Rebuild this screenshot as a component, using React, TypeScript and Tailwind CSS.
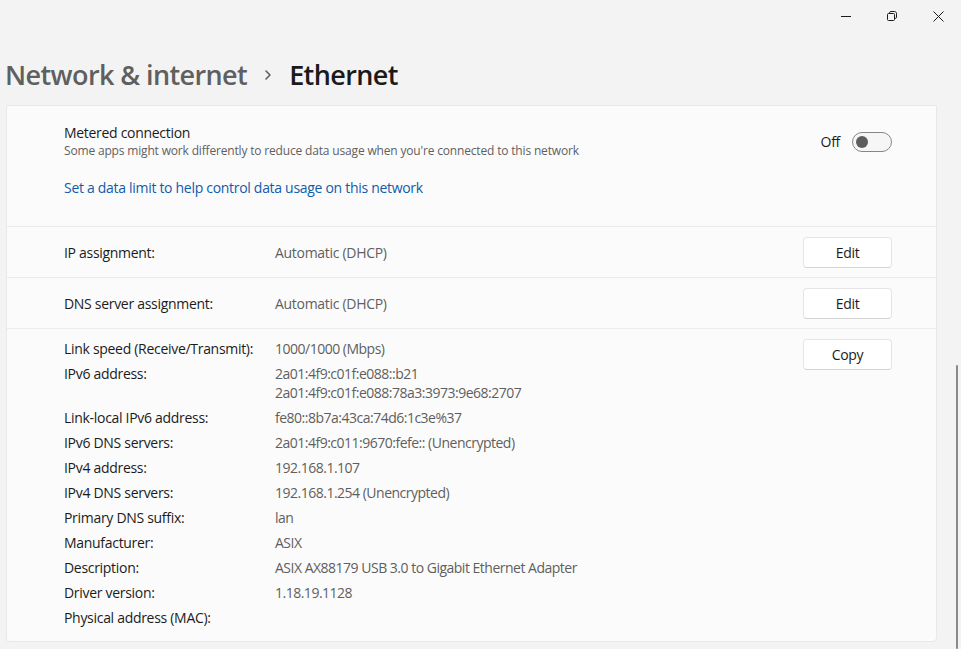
import React from "react";

const details: { label: string; values: string[] }[] = [
  { label: "Link speed (Receive/Transmit):", values: ["1000/1000 (Mbps)"] },
  {
    label: "IPv6 address:",
    values: ["2a01:4f9:c01f:e088::b21", "2a01:4f9:c01f:e088:78a3:3973:9e68:2707"],
  },
  { label: "Link-local IPv6 address:", values: ["fe80::8b7a:43ca:74d6:1c3e%37"] },
  { label: "IPv6 DNS servers:", values: ["2a01:4f9:c011:9670:fefe:: (Unencrypted)"] },
  { label: "IPv4 address:", values: ["192.168.1.107"] },
  { label: "IPv4 DNS servers:", values: ["192.168.1.254 (Unencrypted)"] },
  { label: "Primary DNS suffix:", values: ["lan"] },
  { label: "Manufacturer:", values: ["ASIX"] },
  { label: "Description:", values: ["ASIX AX88179 USB 3.0 to Gigabit Ethernet Adapter"] },
  { label: "Driver version:", values: ["1.18.19.1128"] },
  { label: "Physical address (MAC):", values: [""] },
];

function Btn({ children }: { children: React.ReactNode }) {
  return (
    <button className="w-[89px] h-[31px] bg-white border border-[#e5e5e5] border-b-[#d4d4d4] rounded-[4px] text-[14px] tracking-[-0.3px] text-[#1b1b1b] flex items-center justify-center">
      {children}
    </button>
  );
}

export default function App() {
  return (
    <div
      className="w-[961px] h-[649px] bg-[#f3f3f3] relative overflow-hidden text-[#1b1b1b]"
      style={{ fontFamily: '"Segoe UI", "Open Sans", "Noto Sans", sans-serif' }}
    >
      {/* window controls */}
      <div className="flex justify-end h-[32px]">
        <div className="w-[46px] h-[32px] flex items-center justify-center">
          <svg width="10" height="10" viewBox="0 0 10 10">
            <path d="M0 5.5h10" stroke="#1b1b1b" strokeWidth="1" />
          </svg>
        </div>
        <div className="w-[46px] h-[32px] flex items-center justify-center">
          <svg width="10" height="10" viewBox="0 0 10 10" fill="none" stroke="#1b1b1b" strokeWidth="1">
            <rect x="0.5" y="2.5" width="7" height="7" rx="1" />
            <path d="M2.5 2.5V1.8c0-.7.6-1.3 1.3-1.3h3.9c1 0 1.8.8 1.8 1.8v3.9c0 .7-.6 1.3-1.3 1.3h-.7" />
          </svg>
        </div>
        <div className="w-[46px] h-[32px] flex items-center justify-center">
          <svg width="11" height="11" viewBox="0 0 11 11">
            <path d="M0.5 0.5l10 10M10.5 0.5l-10 10" stroke="#1b1b1b" strokeWidth="1" />
          </svg>
        </div>
      </div>

      {/* title */}
      <div className="flex items-center h-[40px] mt-[23px] pl-[5px] text-[27px] tracking-[-0.6px] font-semibold leading-[40px]">
        <span className="text-[#5f5f5f]">Network &amp; internet</span>
        <span className="ml-[17px] mr-[17px] flex items-center">
          <svg width="8" height="12" viewBox="0 0 8 12" fill="none">
            <path d="M2 2l4 4-4 4" stroke="#5f5f5f" strokeWidth="1.6" strokeLinecap="round" strokeLinejoin="round" />
          </svg>
        </span>
        <span className="text-[#1a1a1a]">Ethernet</span>
      </div>

      {/* card */}
      <div className="ml-[6px] mt-[10px] w-[931px] bg-[#fbfbfb] border border-[#e8e8e8] rounded-b-[4px]">
        {/* metered */}
        <div className="pt-[17px] pb-[28px] pl-[57px] pr-[44px] border-b border-[#ebebeb]">
          <div className="flex items-start justify-between">
            <div>
              <div className="text-[14px] tracking-[-0.3px] leading-[20px]">Metered connection</div>
              <div className="text-[12px] tracking-[-0.17px] leading-[16px] text-[#5f5f5f]">
                Some apps might work differently to reduce data usage when you're connected to this network
              </div>
            </div>
            <div className="flex items-center mt-[8px]">
              <span className="text-[14px] tracking-[-0.3px] mr-[12px]">Off</span>
              <div className="w-[40px] h-[20px] rounded-full border border-[#868686] bg-[#f6f6f6] flex items-center pl-[3px]">
                <div className="w-[12px] h-[12px] rounded-full bg-[#5d5d5d]" />
              </div>
            </div>
          </div>
          <div className="mt-[19px] text-[14px] tracking-[-0.3px] leading-[20px] text-[#0f5cab]">
            Set a data limit to help control data usage on this network
          </div>
        </div>

        {/* IP assignment */}
        <div className="h-[51px] flex items-center pl-[57px] pr-[44px] border-b border-[#ebebeb] text-[14px] tracking-[-0.3px]">
          <div className="w-[211px]">IP assignment:</div>
          <div className="flex-1 text-[#5f5f5f]">Automatic (DHCP)</div>
          <Btn>Edit</Btn>
        </div>
        <div className="h-[51px] flex items-center pl-[57px] pr-[44px] border-b border-[#ebebeb] text-[14px] tracking-[-0.3px]">
          <div className="w-[211px]">DNS server assignment:</div>
          <div className="flex-1 text-[#5f5f5f]">Automatic (DHCP)</div>
          <Btn>Edit</Btn>
        </div>

        {/* details */}
        <div className="flex items-start pl-[57px] pr-[44px] pt-[10px] pb-[14px]">
          <div className="flex-1 flex flex-col gap-[6px]">
            {details.map((d) => (
              <div key={d.label} className="flex text-[14px] leading-[19px] tracking-[-0.3px]">
                <div className="w-[211px]">{d.label}</div>
                <div className="text-[#5f5f5f] tracking-[-0.5px]">
                  {d.values.map((v, i) => (
                    <div key={i} className="h-[19px]">{v}</div>
                  ))}
                </div>
              </div>
            ))}
          </div>
          <div>
            <Btn>Copy</Btn>
          </div>
        </div>
      </div>

      {/* scrollbar */}
      <div className="absolute right-[3px] top-[365px] bottom-0 w-[2px] bg-[#8a8a8a] rounded-full" />
    </div>
  );
}
